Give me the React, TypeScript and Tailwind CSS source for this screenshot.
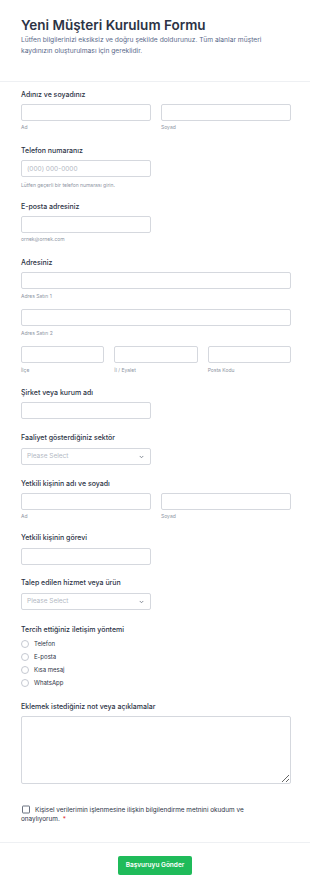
import React from "react";

const inputCls =
  "block h-[17px] w-full rounded-[2px] border border-[#d5d8de] bg-white px-[5px] text-[6.5px] text-[#2c3345] outline-none placeholder:text-[#b3b8c3]";

const Label: React.FC<{ text: string }> = ({ text }) => (
  <div className="h-[10px] text-[7px] leading-[10px] font-medium text-[#2c3345]">{text}</div>
);

const Sub: React.FC<{ text: string; top?: string }> = ({ text, top = "mt-[3px]" }) => (
  <div className={`${top} h-[7px] text-[5px] leading-[7px] text-[#8e95a3]`}>{text}</div>
);

const Select: React.FC = () => (
  <div className="flex h-[17px] w-[130px] items-center justify-between rounded-[2px] border border-[#d5d8de] bg-white pl-[5px] pr-[6px]">
    <span className="text-[6.5px] text-[#b3b8c3]">Please Select</span>
    <svg width="5" height="4" viewBox="0 0 10 8" fill="none">
      <path d="M2 2.5 5 5.5 8 2.5" stroke="#6b7280" strokeWidth="1.6" strokeLinecap="round" strokeLinejoin="round" />
    </svg>
  </div>
);

const NameRow: React.FC = () => (
  <div className="mt-[4px] grid grid-cols-2 gap-[10px]">
    <div>
      <input className={inputCls} />
      <Sub text="Ad" />
    </div>
    <div>
      <input className={inputCls} />
      <Sub text="Soyad" />
    </div>
  </div>
);

export default function App() {
  const methods = ["Telefon", "E-posta", "Kısa mesaj", "WhatsApp"];

  return (
    <div className="min-h-[891px] w-[310px] bg-white font-['Inter',sans-serif]">
      <div className="h-[82px] border-b border-[#eef0f3] pl-[21px] pr-[19px] pt-[15px]">
        <h1 className="text-[13.5px] leading-[20px] font-semibold text-[#2c3345]">Yeni Müşteri Kurulum Formu</h1>
        <p className="w-[248px] text-[6.7px] leading-[11px] text-[#5a6a8a]">
          Lütfen bilgilerinizi eksiksiz ve doğru şekilde doldurunuz. Tüm alanlar müşteri kaydınızın oluşturulması için
          gereklidir.
        </p>
      </div>

      <div className="flex flex-col pl-[21px] pr-[19px] pt-[8px]">
        <div>
          <Label text="Adınız ve soyadınız" />
          <NameRow />
        </div>

        <div className="mt-[15px]">
          <Label text="Telefon numaranız" />
          <div className="mt-[4px] w-[130px]">
            <input className={inputCls} placeholder="(000) 000-0000" />
          </div>
          <Sub text="Lütfen geçerli bir telefon numarası girin." top="mt-[5px]" />
        </div>

        <div className="mt-[13px]">
          <Label text="E-posta adresiniz" />
          <div className="mt-[4px] w-[130px]">
            <input className={inputCls} />
          </div>
          <Sub text="ornek@ornek.com" />
        </div>

        <div className="mt-[15px]">
          <Label text="Adresiniz" />
          <div className="mt-[4px]">
            <input className={inputCls} />
            <Sub text="Adres Satırı 1" top="mt-[4px]" />
          </div>
          <div className="mt-[9px]">
            <input className={inputCls} />
            <Sub text="Adres Satırı 2" top="mt-[4px]" />
          </div>
          <div className="mt-[9px] grid grid-cols-3 gap-[10px]">
            {["İlçe", "İl / Eyalet", "Posta Kodu"].map((t) => (
              <div key={t}>
                <input className={inputCls} />
                <Sub text={t} top="mt-[4px]" />
              </div>
            ))}
          </div>
        </div>

        <div className="mt-[14px]">
          <Label text="Şirket veya kurum adı" />
          <div className="mt-[4px] w-[130px]">
            <input className={inputCls} />
          </div>
        </div>

        <div className="mt-[14px]">
          <Label text="Faaliyet gösterdiğiniz sektör" />
          <div className="mt-[5px]">
            <Select />
          </div>
        </div>

        <div className="mt-[14px]">
          <Label text="Yetkili kişinin adı ve soyadı" />
          <NameRow />
        </div>

        <div className="mt-[13px]">
          <Label text="Yetkili kişinin görevi" />
          <div className="mt-[5px] w-[130px]">
            <input className={inputCls} />
          </div>
        </div>

        <div className="mt-[13px]">
          <Label text="Talep edilen hizmet veya ürün" />
          <div className="mt-[5px]">
            <Select />
          </div>
        </div>

        <div className="mt-[15px]">
          <Label text="Tercih ettiğiniz iletişim yöntemi" />
          <div className="mt-[4px] flex flex-col gap-[4px]">
            {methods.map((m) => (
              <div key={m} className="flex h-[9px] items-center gap-[5px]">
                <span className="h-[8px] w-[8px] rounded-full border border-[#c5c9d1] bg-white" />
                <span className="text-[6px] leading-[9px] text-[#2c3345]">{m}</span>
              </div>
            ))}
          </div>
        </div>

        <div className="mt-[15px]">
          <Label text="Eklemek istediğiniz not veya açıklamalar" />
          <textarea className="mt-[4px] block h-[68px] w-full resize rounded-[2px] border border-[#d5d8de] bg-white outline-none" />
        </div>

        <div className="mt-[20px] w-[250px] text-[6.4px] leading-[9px] text-[#2c3345] after:ml-[3px] after:text-[#e53935] after:content-['*']">
          <span className="mr-[5px] ml-[1px] inline-block h-[8px] w-[8px] translate-y-[1.5px] rounded-[1px] border border-[#6b7280] bg-white align-baseline" />
          Kişisel verilerimin işlenmesine ilişkin bilgilendirme metnini okudum ve onaylıyorum.
        </div>
      </div>

      <div className="mt-[18px] flex justify-center border-t border-[#eef0f3] pt-[13px] pb-[17px]">
        <button className="h-[19px] w-[74px] rounded-[2px] bg-[#1fbb5a] text-[6.5px] font-semibold text-white">
          Başvuruyu Gönder
        </button>
      </div>
    </div>
  );
}
